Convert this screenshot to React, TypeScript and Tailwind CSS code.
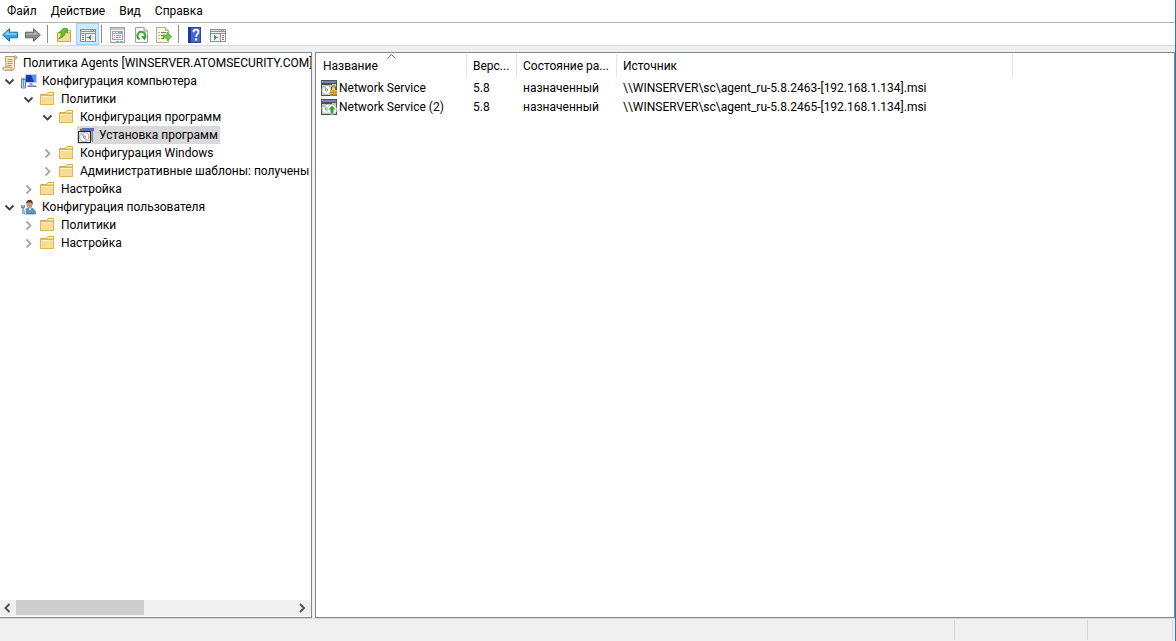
import { useState } from 'react';
import type { ReactNode } from 'react';

type IconProps = { className?: string };

function BackIcon() {
  return (
    <svg viewBox="0 0 16 16" className="h-4 w-4">
      <path d="M.6 8 7.500 1.700v3.500h8v5.600h-8v3.500z" fill="#37a3e8" stroke="#1c74b4" strokeLinejoin="round" />
      <path d="M2.200 7.800 6.600 3.700v2.600h8v1.500z" fill="#8fd6fb" />
    </svg>
  );
}

function ForwardIcon() {
  return (
    <svg viewBox="0 0 16 16" className="h-4 w-4">
      <path d="M15.400 8 8.500 1.700v3.500h-8v5.600h8v3.500z" fill="#8b8b8b" stroke="#626262" strokeLinejoin="round" />
      <path d="M13.800 7.800 9.400 3.700v2.600h-8v1.500z" fill="#b4b4b4" />
    </svg>
  );
}

function FolderUpIcon() {
  return (
    <svg viewBox="0 0 16 16" className="h-4 w-4">
      <path d="M1.500 14.500v-9h6.500l1.500-2h5v11z" fill="#f0cc7c" stroke="#d3a548" />
      <path d="M10 4.500h4" stroke="#fff6d8" />
      <path d="M2 7h12v7H2z" fill="#f9dc93" />
      <path d="M2.500 11.500C4.500 10.500 5.500 8 5.500 5.500H3L7 1.500h4.500V6L9.300 4.300c0 3.700-2 6.700-6.800 7.200z" fill="#5cc43a" stroke="#3b9a27" strokeWidth=".7" />
    </svg>
  );
}

function PaneFrame() {
  return (
    <>
      <path d="M0 2h16v13H0z" fill="#8a939c" />
      <path d="M1 3h10v1H1z" fill="#dfe4e9" />
      <path d="M12 3h1v1h-1zM14 3h1v1h-1z" fill="#fff" />
      <path d="M1 5h14v1H1z" fill="#e9edf1" />
      <path d="M1 7h14v7H1z" fill="#fff" />
    </>
  );
}

function TreePaneIcon() {
  return (
    <svg viewBox="0 0 16 16" className="h-4 w-4" shapeRendering="crispEdges">
      <PaneFrame />
      <path d="M5 7h1v7H5z" fill="#8a939c" />
      <path d="M2 8h2v1H2zM2 10h2v1H2zM2 12h2v1H2z" fill="#3f86c8" />
      <path d="M6 7h9v7H6z" fill="#eef0f2" />
      <path d="M11 8v5L7 10.500z" fill="#35ad2b" />
    </svg>
  );
}

function ActionPaneIcon() {
  return (
    <svg viewBox="0 0 16 16" className="h-4 w-4" shapeRendering="crispEdges">
      <PaneFrame />
      <path d="M1 7h9v7H1z" fill="#eef0f2" />
      <path d="M10 7h1v7h-1z" fill="#8a939c" />
      <path d="M12 8h2v1h-2zM12 10h2v1h-2zM12 12h2v1h-2z" fill="#3f86c8" />
      <path d="M4 8v5l4-2.500z" fill="#35ad2b" />
    </svg>
  );
}

function PropertiesIcon() {
  return (
    <svg viewBox="0 0 16 16" className="h-4 w-4" shapeRendering="crispEdges">
      <path d="M0 0h15v16H0z" fill="#9aa1a7" />
      <path d="M1 1h13v14H1z" fill="#f4f5f6" />
      <path d="M1 1h13v2H1z" fill="#c3c9ce" />
      <path d="M2 4h11v9H2z" fill="#9fa9b1" />
      <path d="M3 5h2v1H3zM6 5h2v1H6zM3 7h9v5H3z" fill="#fff" />
      <path d="M4 8h1v1H4zM6 8h5v1H6zM4 10h1v1H4zM6 10h5v1H6z" fill="#7f9bb0" />
      <path d="M6 14h3v1H6z" fill="#38c3e4" />
      <path d="M10 14h3v1h-3z" fill="#9aa3aa" />
    </svg>
  );
}

function RefreshIcon() {
  return (
    <svg viewBox="0 0 16 16" className="h-4 w-4">
      <path d="M2.500.5h8.500l3.500 3.500v11.500h-12z" fill="#fafafa" stroke="#a0a0a0" />
      <path d="M11 .5V4h3.500" fill="#e3e3e3" stroke="#a0a0a0" />
      <path d="M6.800 12.200A3.800 3.800 0 1 1 12 9.500" fill="none" stroke="#3fae3c" strokeWidth="2.200" />
      <path d="M8 9.300h5.800l-2.300 4z" fill="#2f9a30" />
    </svg>
  );
}

function ExportIcon() {
  return (
    <svg viewBox="0 0 16 16" className="h-4 w-4">
      <path d="M.5.500h9l3 3v12H.500z" fill="#fdf6dc" stroke="#b5ac8c" />
      <path d="M9.500.500v3h3" fill="#f0e6c0" stroke="#b5ac8c" />
      <path d="M2.500 5.500h1M2.500 8.500h1M2.500 11.500h1M5 5.500h5M5 8.500h3M5 11.500h3" stroke="#77736a" />
      <path d="M7 8h4V5.200l4.700 4.300-4.700 4.300V11H7z" fill="#66cf45" stroke="#3ea32a" strokeWidth=".7" />
    </svg>
  );
}

function HelpIcon() {
  return (
    <svg viewBox="0 0 16 16" className="h-4 w-4">
      <path d="M1 0h13v16H1z" fill="#4468cc" />
      <path d="M1 0h3v16H1z" fill="#22398f" />
      <path d="M4 .5h9.500v15H4" fill="none" stroke="#2c479f" />
      <path d="M6.500 5.200C6.500 3.500 7.600 2.700 9 2.700s2.500.9 2.500 2.300c0 2-2.400 2.200-2.400 4.700" fill="none" stroke="#fff" strokeWidth="1.800" />
      <path d="M8 11.500h2.200v2H8z" fill="#fff" />
    </svg>
  );
}

function PolicyIcon() {
  return (
    <svg viewBox="0 0 16 16" className="h-4 w-4 shrink-0">
      <path d="M3.500 1.500h10l-1 3v8l-1 2.500h-9l1.500-2.500z" fill="#f8ecc4" stroke="#b09c70" />
      <path d="M12.500 1a1.700 1.700 0 0 1 2.500 1.500c0 1.200-.9 1.700-2.300 1.700z" fill="#e2cd92" stroke="#a8956a" strokeWidth=".8" />
      <path d="M.7 13.300c0-.8.600-1.300 1.400-1.300h7.400c-.4 1 0 2.500 1 3.300H2.500c-1.100 0-1.800-.8-1.800-2z" fill="#eddba4" stroke="#a8956a" strokeWidth=".8" />
      <path d="M5.500 4.500h5M5.500 6.500h5M5.500 8.500h5M5.500 10.500h4" stroke="#9b8e70" strokeWidth=".9" />
    </svg>
  );
}

function ComputerIcon() {
  return (
    <svg viewBox="0 0 16 16" className="h-4 w-4 shrink-0">
      <path d="M4 1h12v9H4z" fill="#c9d0db" />
      <path d="M5 2h10v7H5z" fill="#1536c4" />
      <path d="M10 2h5v7h-2z" fill="#5f8ff2" />
      <path d="M8.500 10h3v2h-3z" fill="#8d98a8" />
      <path d="M6.500 12h8.500v2H6.500z" fill="#b1bac6" />
      <path d="M6.500 13.500h9" stroke="#6e7b8d" />
      <path d="M.5 6.500h4v8.500h-4z" fill="#dbe7f3" stroke="#62809e" />
      <path d="M2.500 5v9" stroke="#5aa0d8" strokeWidth="1.500" />
      <path d="M1 4.500v2h3v-2" fill="none" stroke="#738294" />
    </svg>
  );
}

function UserIcon() {
  return (
    <svg viewBox="0 0 16 16" className="h-4 w-4 shrink-0">
      <path d="M3.500 15c-.3-4 1.500-6 5.200-6s6 2.200 5.800 6z" fill="#5a92c4" stroke="#3c6d9d" strokeWidth=".7" />
      <path d="M7.500 9.200h3L9 12z" fill="#f2f5f8" />
      <ellipse cx="8.500" cy="5.300" rx="3" ry="3.800" fill="#c99470" />
      <path d="M5.200 4.800C5 2 6.700.8 8.700.8s3.500 1.500 3 4.700c-.7-1.300-1.500-2-3-2.200-1.200 0-2.500.4-3.500 1.500z" fill="#4b3b35" />
      <path d="M.8 6v2.500h2.400V6M2 8.500V15" fill="none" stroke="#75808b" strokeWidth="1.300" />
      <path d="M4.300 9v6" stroke="#dce6ef" strokeWidth="1.200" />
    </svg>
  );
}

function FolderIcon() {
  return (
    <svg viewBox="0 0 16 16" className="h-4 w-4 shrink-0">
      <path d="M.5 13.500v-10h6l1.500-2h5.500v12z" fill="#efcd7b" stroke="#d5ab52" />
      <path d="M8 2.500h5" stroke="#fff7dc" />
      <path d="M.5 4.500h13v9H.5z" fill="#f9dd95" stroke="#dcb560" />
      <path d="M1 5.500h12" stroke="#fdeebf" />
    </svg>
  );
}

function PackageIcon({ className }: IconProps) {
  return (
    <svg viewBox="0 0 16 16" className={className}>
      <path d="M0 0h16v16H0z" fill="#4b5059" />
      <path d="M1 1h14v2H1z" fill="#7482bf" />
      <path d="M1 1h1v1H1z" fill="#e8c14a" />
      <path d="M1 5h14v10H1z" fill="#c9cfcc" />
      <path d="M11 4h4v4h-4z" fill="#e0c98c" />
      <circle cx="5.500" cy="10" r="4.600" fill="#fbfcfb" stroke="#9aa39f" strokeWidth=".7" />
      <path d="M5.500 10 2 7.300A4.200 4.200 0 0 1 4.500 5.800z" fill="#9fd3a8" />
      <circle cx="5.500" cy="10" r="1.100" fill="#fff" stroke="#6f7773" strokeWidth=".8" />
    </svg>
  );
}

function InstallIcon() {
  return (
    <svg viewBox="0 0 16 16" className="h-4 w-4 shrink-0">
      <path d="M2 1h14v3H2z" fill="#5c6fc0" />
      <path d="M2 1h2v1H2z" fill="#e8c14a" />
      <path d="M5 4h10v10H5z" fill="#d9a53b" />
      <path d="M14 4h1v11h-1z" fill="#5f86c9" />
      <path d="M0 4h13v12H0z" fill="#23272b" />
      <path d="M1 5h11v10H1z" fill="#dfe3e1" />
      <circle cx="6.300" cy="10" r="4.500" fill="#fdfefd" stroke="#8f9894" strokeWidth=".7" />
      <path d="M6.300 10 3 7.600a4 4 0 0 1 2.300-1.500z" fill="#8fd09c" />
      <path d="M6.300 10l3.300 2.400a4 4 0 0 1-2.300 1.500z" fill="#c9c3e0" />
      <circle cx="6.300" cy="10" r="1.100" fill="#fff" stroke="#5e6663" strokeWidth=".8" />
    </svg>
  );
}

function LockedPackageIcon() {
  return (
    <span className="relative block h-4 w-4 shrink-0">
      <PackageIcon className="h-4 w-4" />
      <svg viewBox="0 0 16 16" className="absolute inset-0 h-4 w-4">
        <path d="M10.500 10V8a2 2 0 0 1 4 0v2" fill="none" stroke="#8a6a1c" strokeWidth="1.200" />
        <path d="M9 10h7v5.500H9z" fill="#e3ae3a" />
        <path d="M9 12.500h7M9 14.500h7" stroke="#b5801f" strokeWidth=".8" />
      </svg>
    </span>
  );
}

function UpgradePackageIcon() {
  return (
    <span className="relative block h-4 w-4 shrink-0">
      <PackageIcon className="h-4 w-4" />
      <svg viewBox="0 0 16 16" className="absolute inset-0 h-4 w-4">
        <circle cx="11" cy="10.500" r="4.800" fill="#fff" stroke="#a9b0ac" strokeWidth=".6" />
        <path d="M11 6.500 14.500 10.500h-2v4h-3v-4h-2z" fill="#2fa336" />
      </svg>
    </span>
  );
}

function Chevron({ open }: { open: boolean }) {
  return (
    <svg viewBox="0 0 10 10" className="h-[10px] w-[10px]" fill="none">
      {open ? (
        <path d="M1.500 3.500l4 4 4-4" stroke="#404040" strokeWidth="1.800" />
      ) : (
        <path d="M3.500 1.500l4 4-4 4" stroke="#a6a6a6" strokeWidth="1.800" />
      )}
    </svg>
  );
}

type TreeNode = {
  id: string;
  label: string;
  icon: ReactNode;
  indent: string;
  open?: boolean;
};

const tree: TreeNode[] = [
  { id: 'computer', label: 'Конфигурация компьютера', icon: <ComputerIcon />, indent: 'pl-0', open: true },
  { id: 'computer-policies', label: 'Политики', icon: <FolderIcon />, indent: 'pl-[19px]', open: true },
  { id: 'software', label: 'Конфигурация программ', icon: <FolderIcon />, indent: 'pl-[38px]', open: true },
  { id: 'install', label: 'Установка программ', icon: <InstallIcon />, indent: 'pl-[57px]' },
  { id: 'windows', label: 'Конфигурация Windows', icon: <FolderIcon />, indent: 'pl-[38px]', open: false },
  { id: 'templates', label: 'Административные шаблоны: получены', icon: <FolderIcon />, indent: 'pl-[38px]', open: false },
  { id: 'computer-settings', label: 'Настройка', icon: <FolderIcon />, indent: 'pl-[19px]', open: false },
  { id: 'user', label: 'Конфигурация пользователя', icon: <UserIcon />, indent: 'pl-0', open: true },
  { id: 'user-policies', label: 'Политики', icon: <FolderIcon />, indent: 'pl-[19px]', open: false },
  { id: 'user-settings', label: 'Настройка', icon: <FolderIcon />, indent: 'pl-[19px]', open: false },
];

const packages = [
  { name: 'Network Service', icon: <LockedPackageIcon />, version: '5.8', state: 'назначенный', source: '\\\\WINSERVER\\sc\\agent_ru-5.8.2463-[192.168.1.134].msi' },
  { name: 'Network Service (2)', icon: <UpgradePackageIcon />, version: '5.8', state: 'назначенный', source: '\\\\WINSERVER\\sc\\agent_ru-5.8.2465-[192.168.1.134].msi' },
];

function ToolButton({ label, active, children }: { label: string; active?: boolean; children: ReactNode }) {
  return (
    <button
      aria-label={label}
      className={
        active
          ? 'flex h-[22px] w-[23px] items-center border border-[#99d1ff] bg-[#cce8ff] pt-px pl-[3px]'
          : 'flex h-[22px] w-[23px] items-center pt-px pl-[3px] hover:bg-[#e5f3ff]'
      }
    >
      {children}
    </button>
  );
}

function Separator() {
  return <div className="mr-[5px] ml-[2px] h-[18px] w-px bg-[#8d8d8d]" />;
}

export default function App() {
  const [selected, setSelected] = useState('install');

  return (
    <div className="flex h-screen flex-col border-r border-[#2a7ab5] bg-[#f0f0f0] font-['Roboto','Noto_Sans',sans-serif] text-[12px] leading-[18px] text-black">
      {/* Menu bar */}
      <nav className="flex h-[23px] shrink-0 items-center gap-[14px] border-b border-[#b4b4b4] bg-white pl-[7px]">
        <button>Файл</button>
        <button>Действие</button>
        <button>Вид</button>
        <button>Справка</button>
      </nav>

      {/* Toolbar */}
      <div className="flex h-[23px] shrink-0 items-center border-b border-[#d9d9d9] bg-white">
        <div className="-ml-px flex items-center">
          <ToolButton label="Назад"><BackIcon /></ToolButton>
          <ToolButton label="Вперед"><ForwardIcon /></ToolButton>
          <Separator />
          <ToolButton label="На уровень вверх"><FolderUpIcon /></ToolButton>
          <ToolButton label="Дерево консоли" active><TreePaneIcon /></ToolButton>
          <Separator />
          <ToolButton label="Свойства"><PropertiesIcon /></ToolButton>
          <ToolButton label="Обновить"><RefreshIcon /></ToolButton>
          <ToolButton label="Экспорт списка"><ExportIcon /></ToolButton>
          <Separator />
          <ToolButton label="Справка"><HelpIcon /></ToolButton>
          <ToolButton label="Панель действий"><ActionPaneIcon /></ToolButton>
        </div>
      </div>

      <main className="flex min-h-0 flex-1 gap-[3px] pt-[6px]">
        {/* Console tree */}
        <aside className="flex w-[312px] shrink-0 flex-col border-y border-r border-[#828790] bg-white">
          <div className="flex-1 overflow-hidden pt-px whitespace-nowrap">
            <div className="flex h-[18px] items-center gap-[5px] pl-[2px]">
              <PolicyIcon />
              Политика Agents [WINSERVER.ATOMSECURITY.COM]
            </div>
            <ul>
              {tree.map((node) => (
                <li key={node.id} className={`flex h-[18px] items-center ${node.indent}`}>
                  <span className="flex w-5 shrink-0 justify-center pr-[2px]">
                    {node.open !== undefined && (
                      <button aria-label={node.label}>
                        <Chevron open={node.open} />
                      </button>
                    )}
                  </span>
                  <button
                    onClick={() => setSelected(node.id)}
                    className={`flex h-[18px] items-center gap-[5px] pr-[2px] pl-px ${selected === node.id ? 'bg-[#d9d9d9]' : ''}`}
                  >
                    {node.icon}
                    {node.label}
                  </button>
                </li>
              ))}
            </ul>
          </div>
          <div className="mb-px flex h-4 shrink-0 items-center bg-[#f0f0f0]">
            <button aria-label="Влево" className="flex h-4 w-4 items-center justify-center">
              <svg viewBox="0 0 10 10" className="h-[10px] w-[10px]" fill="none">
                <path d="M6.500 1 2.500 5l4 4" stroke="#555" strokeWidth="2" />
              </svg>
            </button>
            <div className="h-full flex-1">
              <div className="h-[15px] w-32 bg-[#cdcdcd]" />
            </div>
            <button aria-label="Вправо" className="flex h-4 w-4 items-center justify-center">
              <svg viewBox="0 0 10 10" className="h-[10px] w-[10px]" fill="none">
                <path d="M2 1l4 4-4 4" stroke="#555" strokeWidth="2" />
              </svg>
            </button>
          </div>
        </aside>

        {/* Package list */}
        <section className="min-w-0 flex-1 overflow-hidden border border-[#828790] bg-white pt-px">
          <table className="w-[697px] table-fixed border-collapse text-left whitespace-nowrap">
            <colgroup>
              <col className="w-[151px]" />
              <col className="w-[50px]" />
              <col className="w-[100px]" />
              <col className="w-[396px]" />
            </colgroup>
            <thead>
              <tr className="h-6">
                <th className="relative p-0 pl-[7px] font-normal shadow-[inset_-1px_0_#e5e5e5]">
                  Название
                  <svg viewBox="0 0 9 5" className="absolute inset-x-0 top-0 mx-auto h-[5px] w-[9px]" fill="none">
                    <path d="M.5 4.500l4-4 4 4" stroke="#6d6d6d" />
                  </svg>
                </th>
                <th className="p-0 pl-[6px] font-normal shadow-[inset_-1px_0_#e5e5e5]">Верс...</th>
                <th className="p-0 pl-[6px] font-normal shadow-[inset_-1px_0_#e5e5e5]">Состояние ра...</th>
                <th className="p-0 pl-[6px] font-normal shadow-[inset_-1px_0_#e5e5e5]">Источник</th>
              </tr>
            </thead>
            <tbody>
              {packages.map((item) => (
                <tr key={item.source} className="h-[19px]">
                  <td className="p-0 pl-[5px]">
                    <div className="flex items-center gap-[2px]">
                      {item.icon}
                      {item.name}
                    </div>
                  </td>
                  <td className="p-0 pl-[6px]">{item.version}</td>
                  <td className="p-0 pl-[6px]">{item.state}</td>
                  <td className="p-0 pl-[6px]">{item.source}</td>
                </tr>
              ))}
            </tbody>
          </table>
        </section>
      </main>

      {/* Status bar */}
      <footer className="flex h-[23px] shrink-0 justify-end border-t border-[#d7d7d7] py-px pr-[2px]">
        <div className="w-[133px] border-l border-[#d7d7d7]" />
        <div className="w-[86px] border-x border-[#d7d7d7]" />
      </footer>
    </div>
  );
}
